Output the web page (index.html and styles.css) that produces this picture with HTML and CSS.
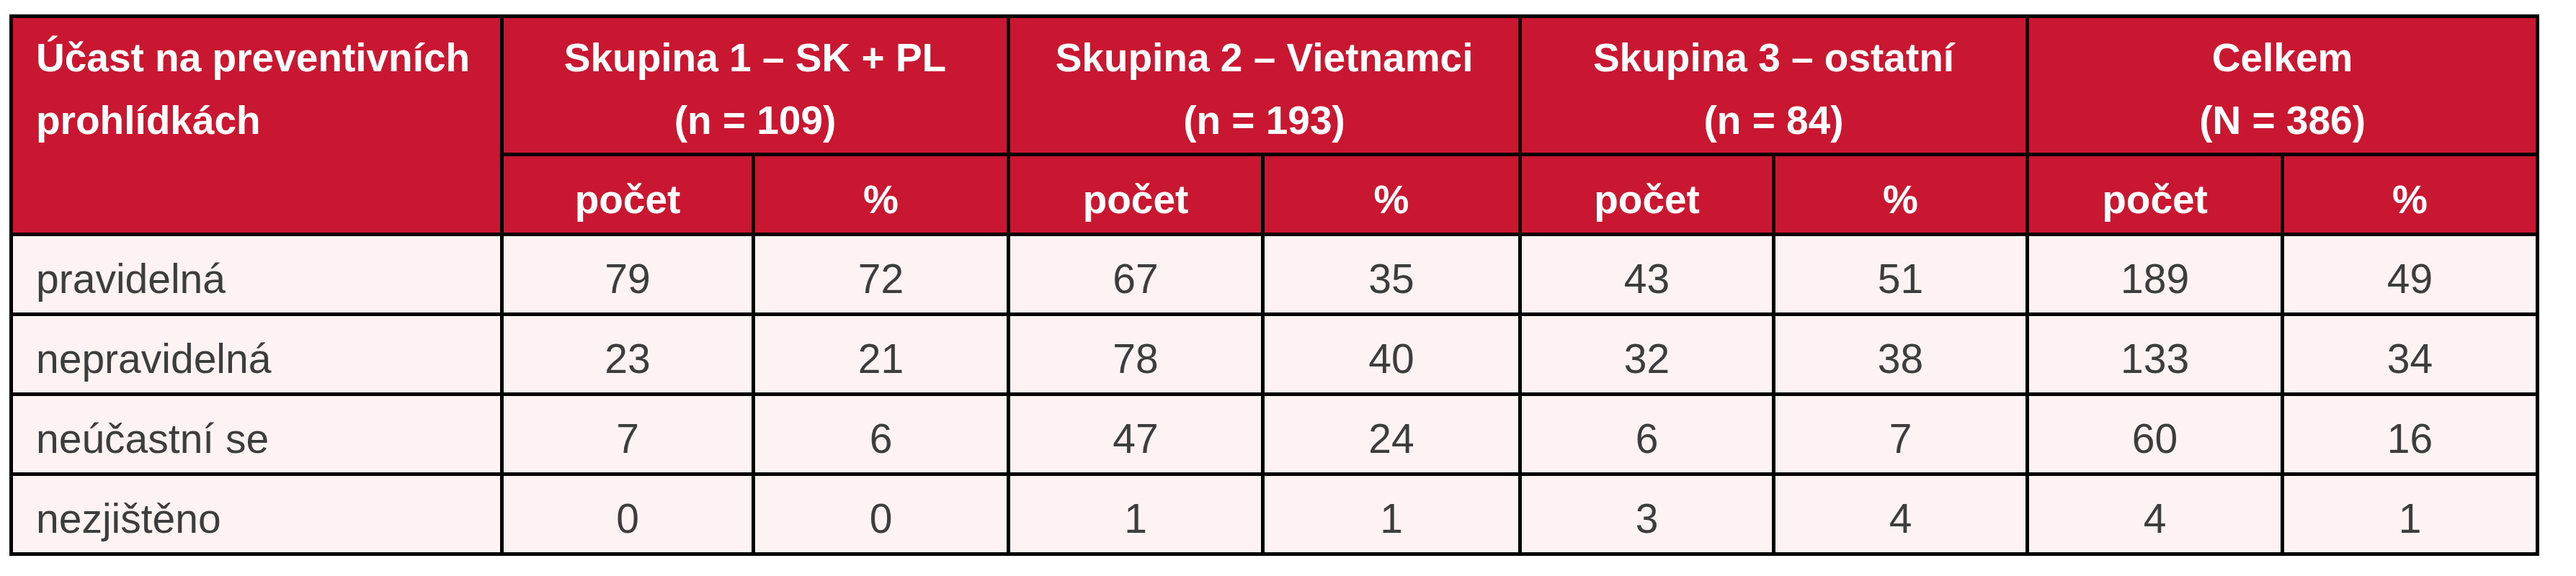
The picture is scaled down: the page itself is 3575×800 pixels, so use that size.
FILE: index.html
```html
<!DOCTYPE html>
<html lang="cs">
<head>
<meta charset="utf-8">
<title>Účast na preventivních prohlídkách</title>
<link rel="stylesheet" href="styles.css">
</head>
<body>
<table class="data">
  <colgroup>
    <col class="c-label">
    <col class="c1"><col class="c2">
    <col class="c3"><col class="c4">
    <col class="c5"><col class="c6">
    <col class="c7"><col class="c8">
  </colgroup>
  <thead>
    <tr class="hrow1">
      <th class="label-head" rowspan="2">Účast na preventivních<br>prohlídkách</th>
      <th class="group-head" colspan="2">Skupina 1 – SK + PL<br>(n = 109)</th>
      <th class="group-head" colspan="2">Skupina 2 – Vietnamci<br>(n = 193)</th>
      <th class="group-head" colspan="2">Skupina 3 – ostatní<br>(n = 84)</th>
      <th class="group-head" colspan="2">Celkem<br>(N = 386)</th>
    </tr>
    <tr class="hrow2">
      <th class="sub-head">počet</th><th class="sub-head">%</th>
      <th class="sub-head">počet</th><th class="sub-head">%</th>
      <th class="sub-head">počet</th><th class="sub-head">%</th>
      <th class="sub-head">počet</th><th class="sub-head">%</th>
    </tr>
  </thead>
  <tbody>
    <tr class="drow">
      <td class="label">pravidelná</td>
      <td>79</td><td>72</td><td>67</td><td>35</td><td>43</td><td>51</td><td>189</td><td>49</td>
    </tr>
    <tr class="drow">
      <td class="label">nepravidelná</td>
      <td>23</td><td>21</td><td>78</td><td>40</td><td>32</td><td>38</td><td>133</td><td>34</td>
    </tr>
    <tr class="drow">
      <td class="label">neúčastní se</td>
      <td>7</td><td>6</td><td>47</td><td>24</td><td>6</td><td>7</td><td>60</td><td>16</td>
    </tr>
    <tr class="drow">
      <td class="label">nezjištěno</td>
      <td>0</td><td>0</td><td>1</td><td>1</td><td>3</td><td>4</td><td>4</td><td>1</td>
    </tr>
  </tbody>
</table>
</body>
</html>
```
FILE: styles.css
```css
html, body {
  margin: 0;
  padding: 0;
  background: #ffffff;
}

body {
  font-family: "Liberation Sans", Arial, sans-serif;
}

.data {
  margin: 20px 0 0 13px;
  border-collapse: separate;
  border-spacing: 0;
  table-layout: fixed;
  width: 3511px;
  border-top: 5px solid #000;
  border-left: 5px solid #000;
}

.c-label { width: 681px; }
.c1 { width: 349px; }
.c2 { width: 354px; }
.c3 { width: 353px; }
.c4 { width: 357px; }
.c5 { width: 352px; }
.c6 { width: 352px; }
.c7 { width: 354px; }
.c8 { width: 354px; }

.data th,
.data td {
  border-right: 5px solid #000;
  border-bottom: 5px solid #000;
  padding: 0;
}

.data th {
  background: #c91631;
  color: #ffffff;
  font-weight: 700;
  font-size: 55px;
  white-space: nowrap;
}

.hrow1 { height: 192px; }
.hrow2 { height: 111px; }
.drow { height: 111px; }

.data .label-head {
  text-align: left;
  vertical-align: top;
  line-height: 87px;
  padding: 12px 0 0 32px;
}

.data .group-head {
  text-align: center;
  vertical-align: top;
  line-height: 87px;
  padding: 12px 0 0 0;
}

.data .sub-head {
  text-align: center;
  vertical-align: middle;
  line-height: 64px;
  padding: 14px 0 0 0;
}

.data td {
  background: #fcf3f2;
  color: #3d3d3d;
  font-size: 57px;
  line-height: 64px;
  text-align: center;
  vertical-align: middle;
  padding: 12px 0 0 0;
  white-space: nowrap;
}

.data td.label {
  text-align: left;
  padding-left: 32px;
}
```
